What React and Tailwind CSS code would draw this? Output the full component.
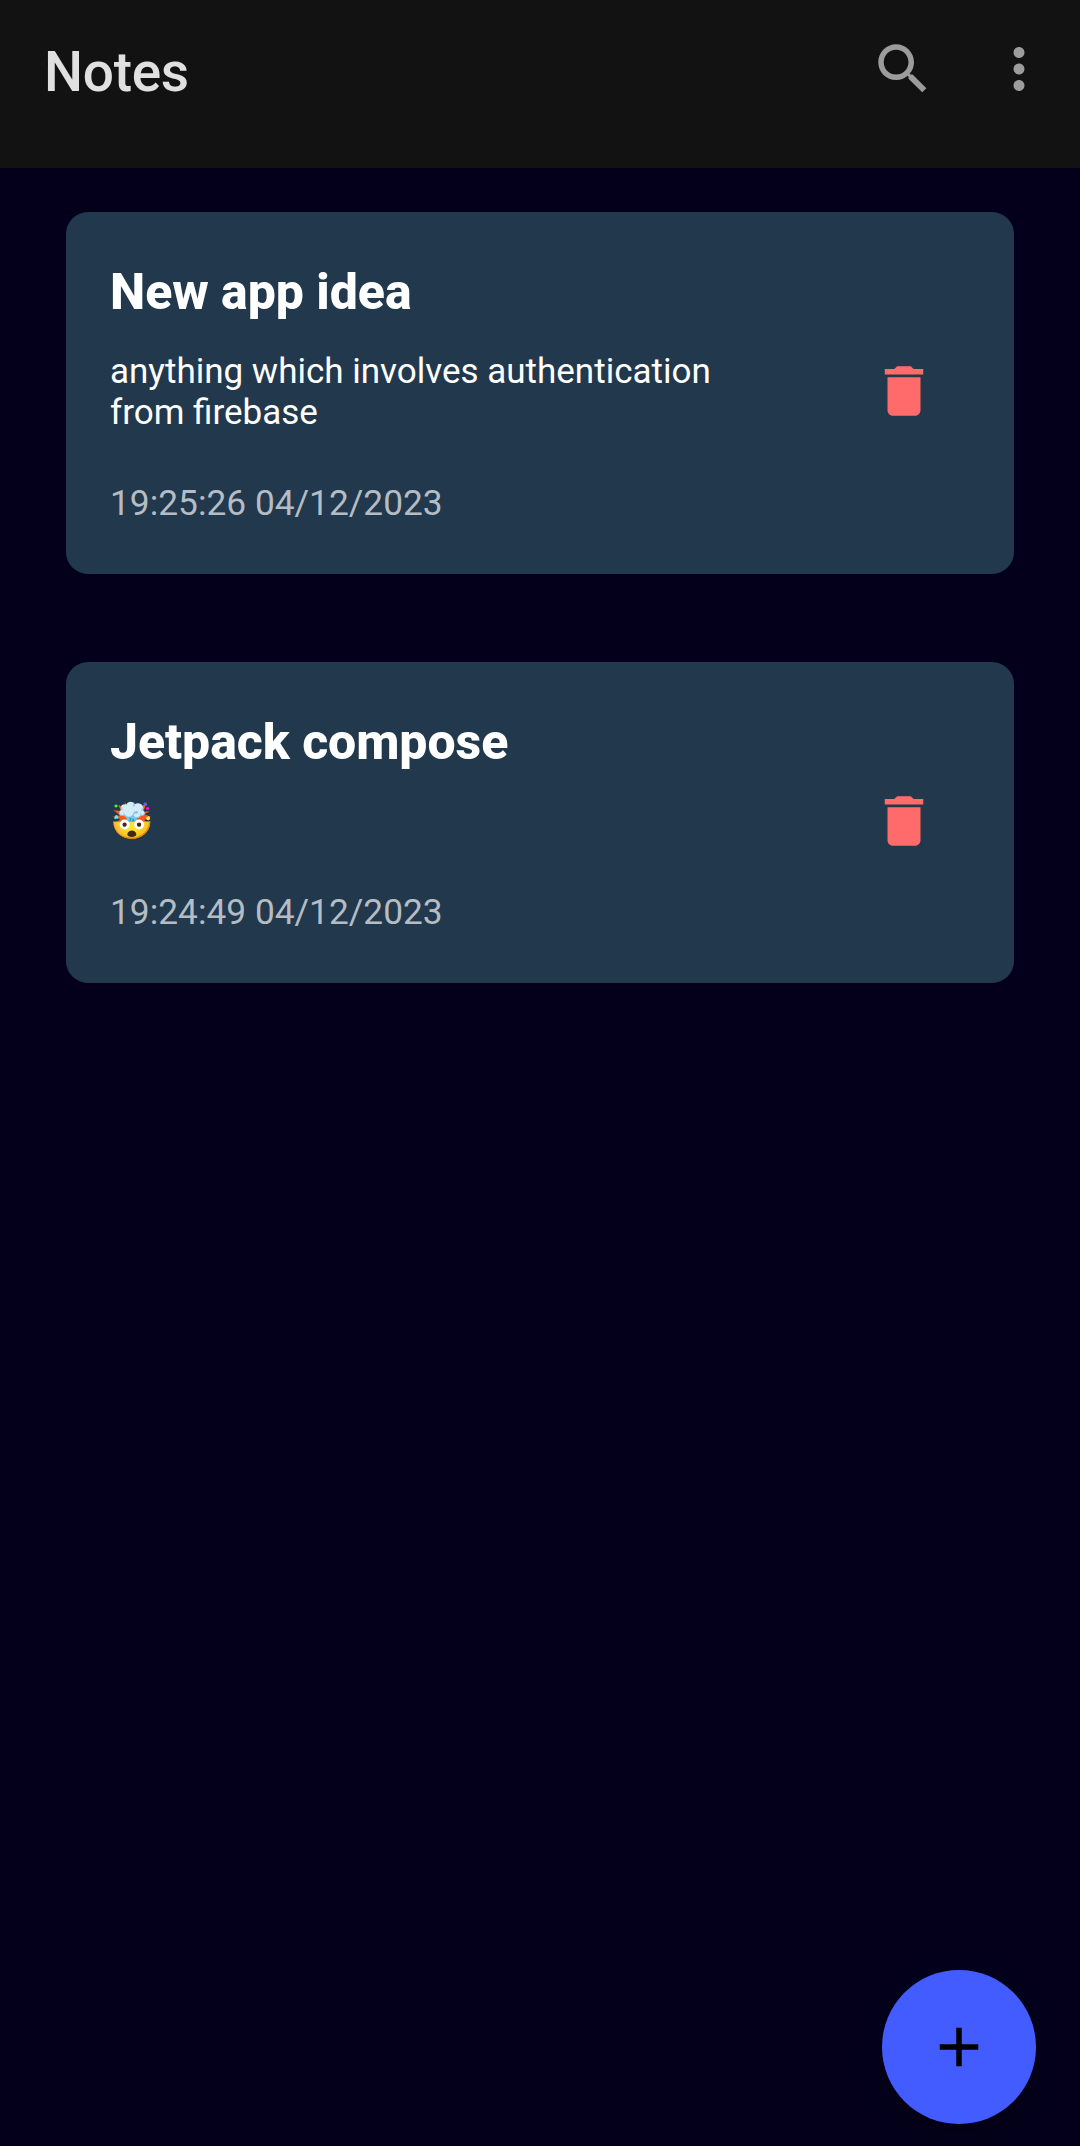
import React from "react";

function Trash() {
  return (
    <svg className="size-[66px] shrink-0" viewBox="0 0 24 24" fill="#ff6b6b">
      <path d="M6 19c0 1.1.9 2 2 2h8c1.1 0 2-.9 2-2V7H6v12zM19 4h-3.5l-1-1h-5l-1 1H5v2h14V4z" />
    </svg>
  );
}

function Note({ title, date, children }) {
  return (
    <article className="flex items-center rounded-[22px] bg-[#22384c] pt-[44px] pr-[77px] pb-[48px] pl-[44px]">
      <div className="min-w-0 flex-1 pb-[2px]">
        <h2 className="pt-px text-[50px] leading-[70px] font-extrabold tracking-[-0.05px] text-white">{title}</h2>
        <div className="mt-[24px] text-[35px] leading-[41px] text-white">{children}</div>
        <p className="mt-[50px] text-[35.3px] leading-[41px] text-[#b5bdc4]">{date}</p>
      </div>
      <Trash />
    </article>
  );
}

export default function App() {
  return (
    <div className="relative h-[2146px] w-[1080px] overflow-hidden bg-[#04001c] font-['Roboto',sans-serif]">
      <header className="flex h-[168px] items-start justify-between bg-[#121212] pl-[44px]">
        <h1 className="mt-[36px] text-[55px] leading-[72px] font-medium tracking-[-0.3px] text-[#e0e0e0]">Notes</h1>
        <div className="mt-[36px] mr-[28px] flex gap-[50px]">
          <svg className="size-[66px]" viewBox="0 0 24 24" fill="#9c9c9c">
            <path d="M15.5 14h-.79l-.28-.27C15.41 12.59 16 11.11 16 9.5 16 5.91 13.09 3 9.5 3S3 5.91 3 9.5 5.91 16 9.5 16c1.61 0 3.09-.59 4.23-1.57l.27.28v.79l5 4.99L20.49 19l-4.99-5zm-6 0C7.01 14 5 11.99 5 9.5S7.01 5 9.5 5 14 7.01 14 9.5 11.99 14 9.5 14z" />
          </svg>
          <svg className="size-[66px]" viewBox="0 0 24 24" fill="#9c9c9c">
            <path d="M12 8c1.1 0 2-.9 2-2s-.9-2-2-2-2 .9-2 2 .9 2 2 2zm0 2c-1.1 0-2 .9-2 2s.9 2 2 2 2-.9 2-2-.9-2-2-2zm0 6c-1.1 0-2 .9-2 2s.9 2 2 2 2-.9 2-2-.9-2-2-2z" />
          </svg>
        </div>
      </header>
      <main className="flex flex-col gap-[88px] px-[66px] pt-[44px]">
        <Note title="New app idea" date="19:25:26 04/12/2023">
          anything which involves authentication<br />from firebase
        </Note>
        <Note title="Jetpack compose" date="19:24:49 04/12/2023">🤯</Note>
      </main>
      <button className="absolute right-[44px] bottom-[22px] flex size-[154px] items-center justify-center rounded-full bg-[#425cff] shadow-[0_12px_24px_rgba(0,0,0,0.3)]">
        <svg className="size-[66px]" viewBox="0 0 24 24"><path d="M19 13h-6v6h-2v-6H5v-2h6V5h2v6h6v2z" /></svg>
      </button>
    </div>
  );
}
